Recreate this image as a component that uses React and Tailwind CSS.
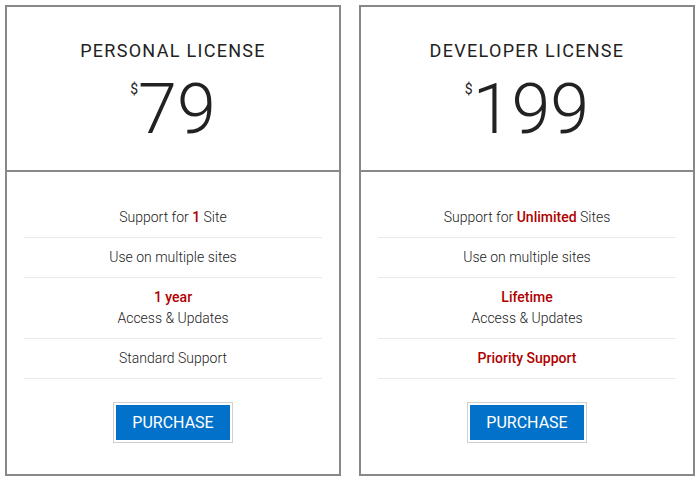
import React from "react";

const red = "text-[#b00000] font-medium";

function Row({ children }) {
  return (
    <div className="border-b border-[#eaeaea] py-[9px] text-center text-[14px] font-light leading-[21px] text-[#222]">
      {children}
    </div>
  );
}

function Card({ title, price, rows }) {
  return (
    <div className="flex h-[471px] w-[336px] flex-col border-2 border-[#888]">
      <div className="flex h-[165px] flex-col items-center border-b-2 border-[#888] pt-[32px]">
        <div className="text-[18px] font-normal leading-[24px] tracking-[1.3px] text-[#222]">{title}</div>
        <div className="mt-[11px] flex items-start text-[#222]">
          <span className="mt-[8px] text-[14px] leading-[14px]">$</span>
          <span className="text-[70px] font-light leading-[70px]">{price}</span>
        </div>
      </div>
      <div className="flex flex-col px-[17px] pt-[26px]">
        {rows.map((r, i) => (
          <Row key={i}>{r}</Row>
        ))}
        <div className="mt-[23px] flex justify-center">
          <div className="border border-[#cfcfcf] p-[2px]">
            <div className="flex h-[35px] w-[114px] items-center justify-center bg-[#0271c9] text-[16px] text-white">
              PURCHASE
            </div>
          </div>
        </div>
      </div>
    </div>
  );
}

export default function App() {
  return (
    <div className="flex h-[484px] w-[700px] gap-[18px] bg-white p-[5px]" style={{ fontFamily: "Roboto, 'Liberation Sans', sans-serif" }}>
      <Card
        title="PERSONAL LICENSE"
        price="79"
        rows={[
          <>Support for <span className={red}>1</span> Site</>,
          <>Use on multiple sites</>,
          <><div className={red}>1 year</div><div>Access &amp; Updates</div></>,
          <>Standard Support</>,
        ]}
      />
      <Card
        title="DEVELOPER LICENSE"
        price="199"
        rows={[
          <>Support for <span className={red}>Unlimited</span> Sites</>,
          <>Use on multiple sites</>,
          <><div className={red}>Lifetime</div><div>Access &amp; Updates</div></>,
          <span className={red}>Priority Support</span>,
        ]}
      />
    </div>
  );
}
